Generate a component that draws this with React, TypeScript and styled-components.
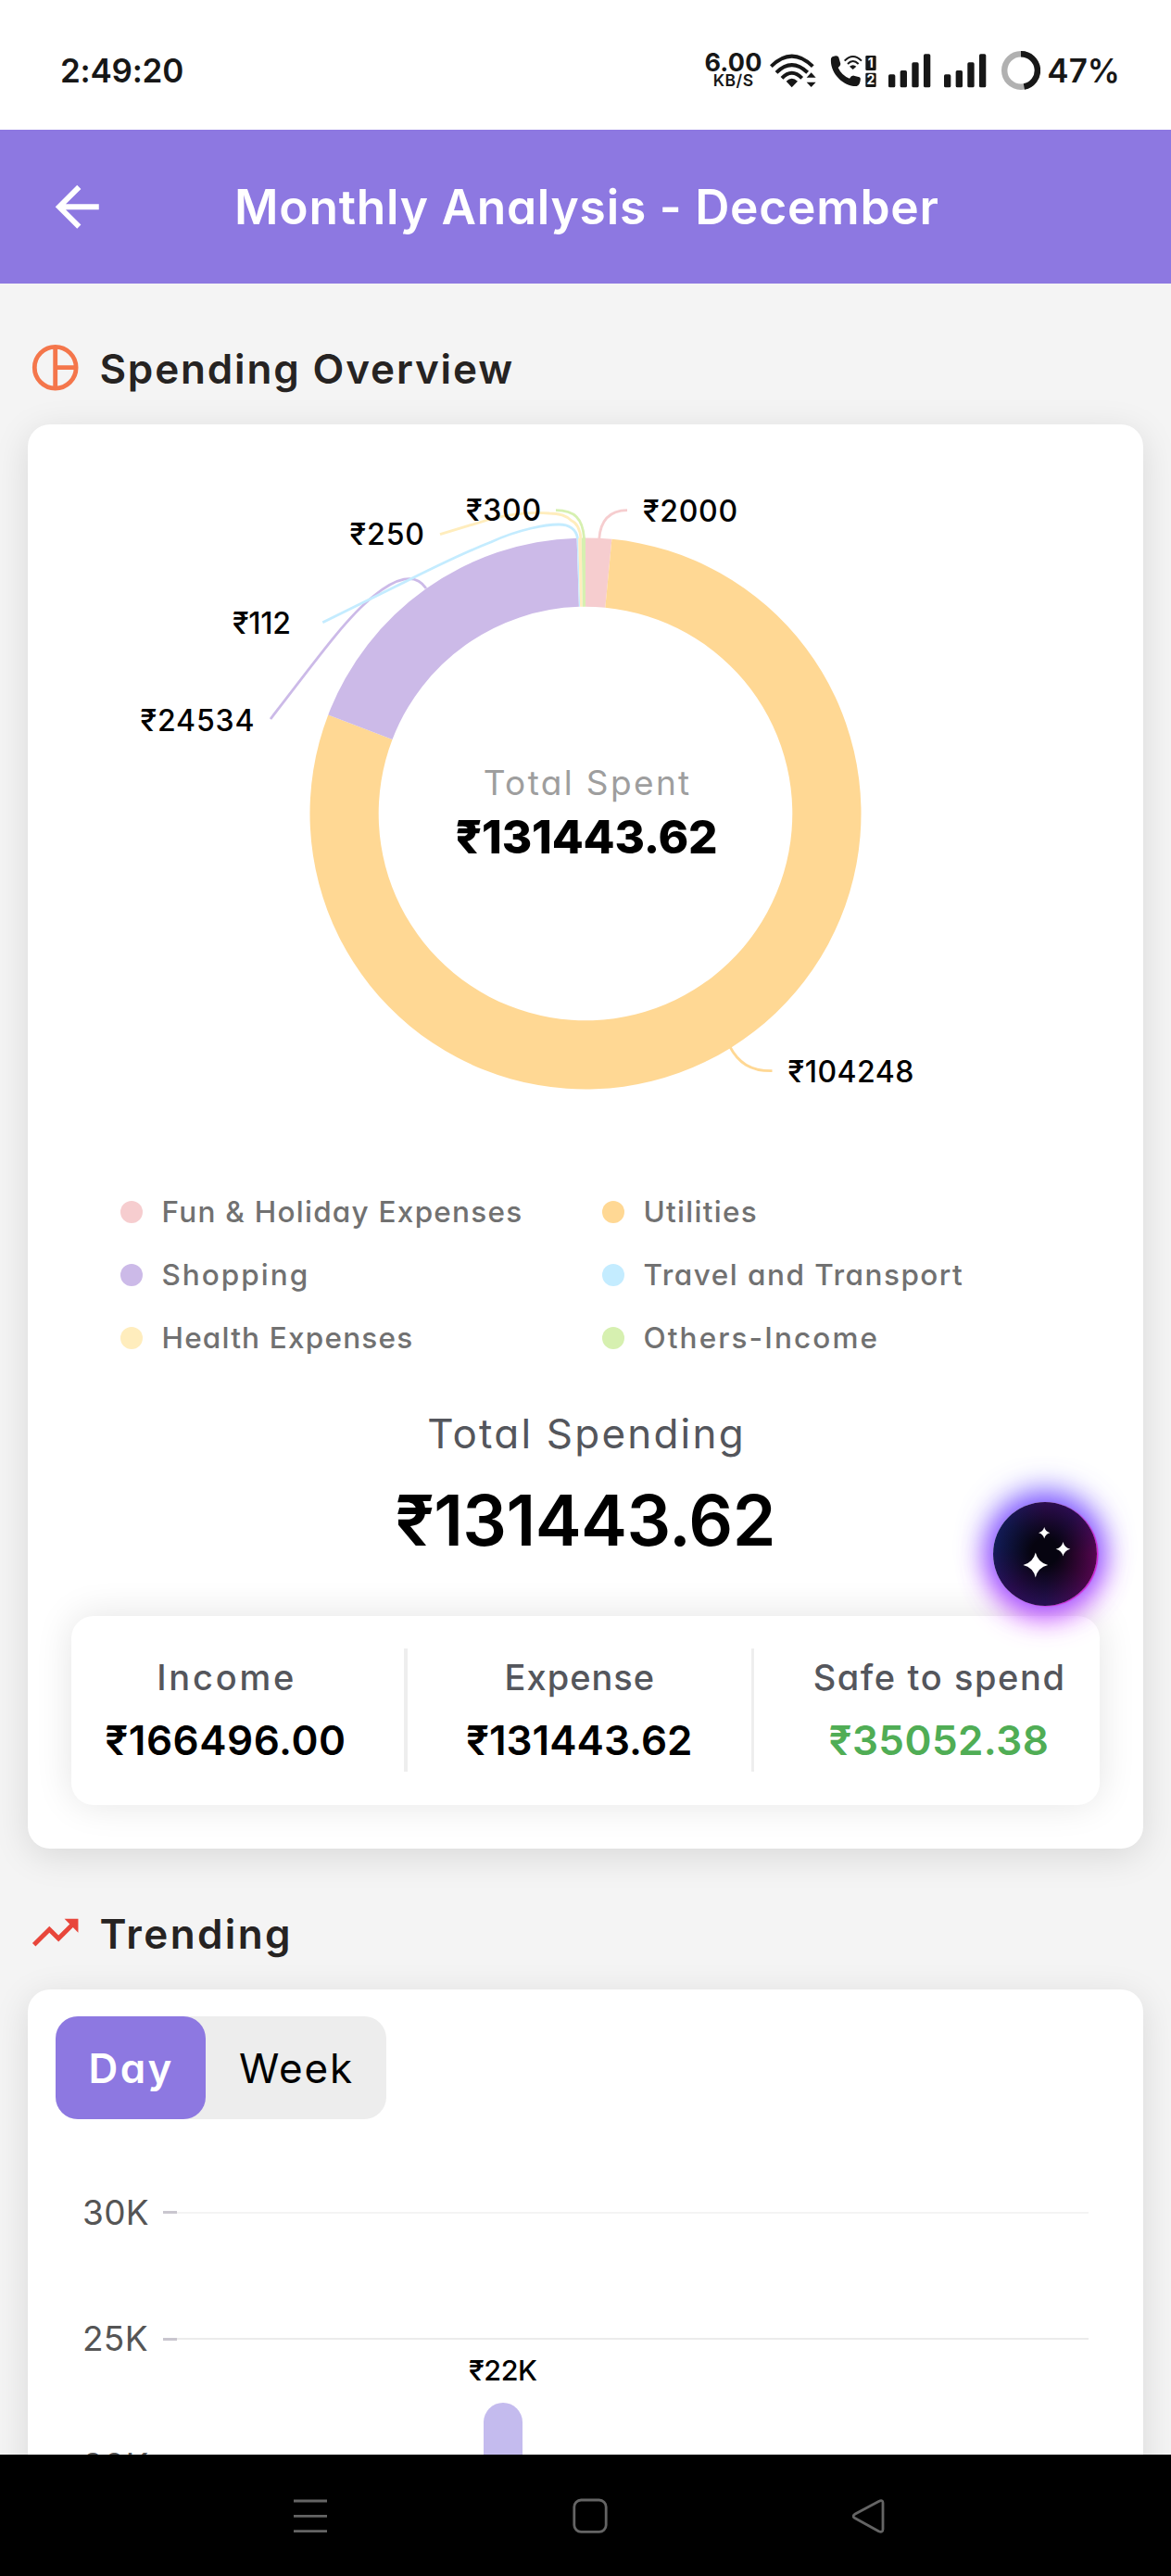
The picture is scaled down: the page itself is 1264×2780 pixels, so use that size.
import React from 'react';
import styled, { createGlobalStyle } from 'styled-components';

const GlobalStyle = createGlobalStyle`
  * { box-sizing: border-box; }
  body {
    margin: 0;
    background: #f4f4f4;
    font-family: Inter, "Noto Sans", sans-serif;
    font-feature-settings: "cv11";
  }
`;

const purple = '#8d78e1';

/* ---------- shared text ---------- */

interface LabelProps {
  $size: number;
  $line: number;
  $weight?: number;
  $color?: string;
  $track?: number;
}

const Label = styled.span<LabelProps>`
  display: block;
  white-space: nowrap;
  font-size: ${(p) => p.$size}px;
  line-height: ${(p) => p.$line}px;
  font-weight: ${(p) => p.$weight ?? 400};
  color: ${(p) => p.$color ?? '#000'};
  letter-spacing: ${(p) => p.$track ?? 0}px;
  margin-right: ${(p) => -(p.$track ?? 0)}px;
`;

/* ---------- page frame ---------- */

const Screen = styled.div`
  display: flex;
  flex-direction: column;
  width: 1264px;
  height: 2780px;
  overflow: hidden;
`;

const StatusBar = styled.div`
  flex: none;
  display: flex;
  align-items: center;
  justify-content: space-between;
  height: 140px;
  padding: 12px 55px 0 65px;
  background: #fff;
`;

const StatusIcons = styled.div`
  display: flex;
  align-items: center;
`;

const NetSpeed = styled.div`
  display: flex;
  flex-direction: column;
  align-items: center;
  width: 60px;
  margin-right: 10px;
`;

const StatusGlyph = styled.svg<{ $w: number; $gap: number }>`
  display: block;
  width: ${(p) => p.$w}px;
  height: 38.3px;
  margin-right: ${(p) => p.$gap}px;
`;

const BatteryRing = styled.svg`
  width: 42px;
  height: 42px;
  margin-right: 7px;
`;

const Header = styled.header`
  flex: none;
  display: grid;
  grid-template-columns: 166px 1fr 164px;
  align-items: center;
  justify-items: center;
  height: 166px;
  background: ${purple};
`;

const BackButton = styled.button`
  display: flex;
  justify-self: start;
  margin-left: 48px;
  padding: 0;
  border: 0;
  background: none;
`;

const Content = styled.main`
  flex: 1;
  min-height: 0;
  overflow: hidden;
  padding: 0 30px;
`;

const SectionTitle = styled.div`
  display: flex;
  align-items: center;
  gap: 18px;
  height: 152px;
  padding-top: 31px;
  svg {
    margin-top: -1px;
  }
`;

const Card = styled.section<{ $height: number }>`
  position: relative;
  height: ${(p) => p.$height}px;
  border-radius: 24px;
  background: #fff;
  box-shadow: 0 8px 38px rgba(0, 0, 0, 0.115);
`;

/* ---------- donut ---------- */

const DonutArea = styled.div`
  position: relative;
  height: 816px;
  > svg {
    display: block;
  }
`;

const DonutCenter = styled.div`
  position: absolute;
  left: 380px;
  top: 361.5px;
  width: 446px;
  display: flex;
  flex-direction: column;
  align-items: center;
`;

const AmountText = styled.text`
  font-size: 32px;
  font-weight: 500;
`;

const Legend = styled.ul`
  display: grid;
  grid-template-columns: 520px 1fr;
  grid-auto-rows: 68px;
  align-items: center;
  margin: 0;
  padding: 0 0 0 100px;
  list-style: none;
`;

const LegendItem = styled.li`
  display: flex;
  align-items: center;
  gap: 20.5px;
`;

const Dot = styled.i<{ $color: string }>`
  width: 24px;
  height: 24px;
  border-radius: 50%;
  background: ${(p) => p.$color};
`;

/* ---------- totals ---------- */

const Totals = styled.div`
  display: flex;
  flex-direction: column;
  align-items: center;
  padding-top: 34px;
`;

const Summary = styled.div`
  display: flex;
  justify-content: space-between;
  align-items: flex-start;
  height: 204px;
  margin: 44.5px 47px 0;
  padding: 35.5px 38px 0 36.5px;
  border-radius: 24px;
  background: #fff;
  box-shadow: 0 -1px 40px rgba(0, 0, 0, 0.11);
`;

const SummaryItem = styled.div`
  display: flex;
  flex-direction: column;
  align-items: center;
`;

const Divider = styled.div`
  width: 3.5px;
  height: 133px;
  background: #eeeeee;
`;

const AssistantButton = styled.button`
  position: absolute;
  left: 1041.5px;
  top: 1162.5px;
  width: 112px;
  height: 112px;
  padding: 0;
  border: 0;
  border-radius: 50%;
  background:
    radial-gradient(circle at 50% 48%, #060410 18%, rgba(6, 4, 16, 0) 68%),
    conic-gradient(#2e0d50, #2c0d52 10%, #55064f 25%, #4b0648 33%, #24104f 50%, #2a0c50 62%, #121c58 78%, #141a55 86%, #2e0d50);
  box-shadow:
    1.5px 0.5px 1px #d21fd0,
    0 -7px 32px 6px rgba(92, 76, 255, 0.8),
    0 9px 30px 5px rgba(220, 60, 255, 0.8);
`;

/* ---------- trend ---------- */

const Segmented = styled.div`
  display: inline-flex;
  height: 110.5px;
  margin: 29px 0 33px 29.5px;
  border-radius: 24px;
  background: #ededed;
`;

const Segment = styled.button<{ $active?: boolean; $width: number }>`
  display: flex;
  align-items: center;
  justify-content: center;
  width: ${(p) => p.$width}px;
  padding: 1px 0 0;
  border: 0;
  border-radius: 24px;
  font-family: inherit;
  font-feature-settings: inherit;
  background: ${(p) => (p.$active ? purple : 'transparent')};
`;

const Plot = styled.div`
  position: relative;
`;

const AxisRow = styled.div`
  display: flex;
  align-items: center;
  height: 136.5px;
  padding: 0 59.5px 0 59px;
`;

const AxisLabel = styled.div`
  width: 87px;
`;

const Tick = styled.div`
  width: 15px;
  height: 3px;
  background: #c9c6cf;
`;

const GridLine = styled.div<{ $faint?: boolean }>`
  flex: 1;
  height: 2px;
  background: ${(p) => (p.$faint ? '#f4f4f4' : '#ebebeb')};
`;

const BarColumn = styled.div`
  position: absolute;
  left: 472.5px;
  top: 213px;
  width: 81px;
  display: flex;
  flex-direction: column;
  align-items: center;
`;

const Bar = styled.div`
  width: 42.5px;
  height: 240px;
  margin-top: 10px;
  border-radius: 21px 21px 0 0;
  background: #c4bbee;
`;

/* ---------- navigation bar ---------- */

const NavBar = styled.nav`
  position: relative;
  flex: none;
  display: grid;
  grid-template-columns: repeat(3, 302px);
  align-items: center;
  justify-items: center;
  height: 131px;
  padding-left: 184px;
  background: #000;
  svg {
    fill: none;
    stroke: #646464;
    stroke-width: 2.8;
  }
`;

/* ---------- data ---------- */

const slices = [
  { name: 'Fun & Holiday Expenses', value: 2000, color: '#f6cdcf', track: 1.25 },
  { name: 'Utilities', value: 104248, color: '#ffd894', track: 1.29 },
  { name: 'Shopping', value: 24534, color: '#ccbae8', track: 2 },
  { name: 'Travel and Transport', value: 112, color: '#c4ecff', track: 1.48 },
  { name: 'Health Expenses', value: 250, color: '#ffedbd', track: 1.2 },
  { name: 'Others-Income', value: 300, color: '#d6f0b0', track: 2.1 },
];

const callouts = [
  { text: '₹24534', x: 151.5, y: 789, track: 0.86, color: '#ccbae8', d: 'M460 635C448 617 427 624 403 643.5C377 664 350 700 292 776' },
  { text: '₹112', x: 251, y: 684, track: -0.3, color: '#c4ecff', d: 'M623.5 581C622 571 614 566 603 566C590 566 560 571 530 585C499 597 467 613 437 628L348.3 671.7' },
  { text: '₹250', x: 377.5, y: 588, track: 0.9, color: '#ffedbd', d: 'M627 581C626 570 622 564 616.7 561.7C611 556 601 554 593 554C573 552 550 555 530 560L475 576.7' },
  { text: '₹300', x: 503, y: 562, track: 0.7, color: '#d6f0b0', d: 'M630.5 581C629 559 620 551 600 550.7' },
  { text: '₹2000', x: 694, y: 562.5, track: 0.68, color: '#f6cdcf', d: 'M646.7 582C648 562 658 551 677 550.7' },
  { text: '₹104248', x: 850.5, y: 1167.5, track: 0.5, color: '#ffd894', d: 'M787.5 1129C797 1147 810 1156 833.5 1155.7' },
];

const CX = 632;
const CY = 878;
const OUTER = 297.5;
const INNER = 223.3;

function ringPath(from: number, to: number) {
  const at = (r: number, a: number) => `${(CX + r * Math.sin(a)).toFixed(2)} ${(CY - r * Math.cos(a)).toFixed(2)}`;
  const large = to - from > Math.PI ? 1 : 0;
  return `M${at(OUTER, from)}A${OUTER} ${OUTER} 0 ${large} 1 ${at(OUTER, to)}L${at(INNER, to)}A${INNER} ${INNER} 0 ${large} 0 ${at(INNER, from)}Z`;
}

function Donut() {
  const total = slices.reduce((sum, s) => sum + s.value, 0);
  let angle = 0;
  return (
    <DonutArea>
      <svg width="1204" height="816" viewBox="30 458 1204 816">
        {slices.map((s) => {
          const start = angle;
          angle += (s.value / total) * Math.PI * 2;
          return <path key={s.name} d={ringPath(start, angle)} fill={s.color} />;
        })}
        {callouts.map((c) => (
          <path key={c.text} d={c.d} fill="none" stroke={c.color} strokeWidth="2.8" />
        ))}
        {callouts.map((c) => (
          <AmountText key={c.text} x={c.x} y={c.y} letterSpacing={c.track}>
            {c.text}
          </AmountText>
        ))}
      </svg>
      <DonutCenter>
        <Label $size={37} $line={50} $color="#9e9e9e" $track={2.36}>Total Spent</Label>
        <Label $size={49.5} $line={67} $weight={800} $track={-0.2}>₹131443.62</Label>
      </DonutCenter>
    </DonutArea>
  );
}

function WifiIcon() {
  return (
    <StatusGlyph $w={50} $gap={14.5} viewBox="245 50 150 115">
      <g fill="none" stroke="#171717" strokeWidth="12">
        <path d="M249 94Q316 28 384 94" />
        <path d="M266 114Q316 65 367 114" />
        <path d="M284 132Q316 99 349 132" />
      </g>
      <path d="M298 142Q316 125 335 142L316 162Z" fill="#171717" />
      <path d="M379 114L394 130H364ZM364 145H394L379 161Z" fill="#171717" />
    </StatusGlyph>
  );
}

function CallIcon() {
  return (
    <StatusGlyph $w={50} $gap={13.5} viewBox="438 50 150 115">
      <path
        d="M441 69Q442 62 456 60Q464 59 466 65L472 86Q472 92 464 98Q476 124 501 133Q507 123 515 124L533 129Q538 131 536 139Q534 155 524 158C480 160 436 113 441 69Z"
        fill="#171717"
      />
      <g fill="none" stroke="#171717" strokeWidth="6">
        <path d="M485 76Q512 48 540 76" />
        <path d="M495 86Q512 68 530 86" />
      </g>
      <path d="M501 94Q512 85 523 94L512 104Z" fill="#171717" />
      <rect x="553" y="59" width="34" height="48" rx="4" fill="#171717" />
      <rect x="553" y="115" width="34" height="46" rx="4" fill="#171717" />
      <g fill="#fff" fontSize="42" fontWeight="700" textAnchor="middle">
        <text x="569" y="98">1</text>
        <text x="570" y="153">2</text>
      </g>
    </StatusGlyph>
  );
}

function SignalIcon({ gap }: { gap: number }) {
  return (
    <StatusGlyph $w={45.3} $gap={gap} viewBox="630 50 136 115" fill="#171717">
      <rect x="630" y="120" width="22" height="42" rx="5" />
      <rect x="668" y="107" width="22" height="55" rx="5" />
      <rect x="706" y="81" width="22" height="81" rx="5" />
      <rect x="744" y="54" width="22" height="108" rx="5" />
    </StatusGlyph>
  );
}

function Sparkles() {
  const star = (x: number, y: number, r: number) => {
    const k = r * 0.24;
    return `M${x} ${y - r}Q${x + k * 0.8} ${y - k * 0.8} ${x + r} ${y}Q${x + k * 0.8} ${y + k * 0.8} ${x} ${y + r}Q${x - k * 0.8} ${y + k * 0.8} ${x - r} ${y}Q${x - k * 0.8} ${y - k * 0.8} ${x} ${y - r}Z`;
  };
  return (
    <svg width="112" height="112" viewBox="0 0 112 112" fill="#fff">
      <path d={star(45.8, 68, 13.4)} />
      <path d={star(75.5, 50.8, 7.8)} />
      <path d={star(55.2, 33.2, 6.2)} />
    </svg>
  );
}

export default function App() {
  return (
    <Screen>
      <GlobalStyle />
      <StatusBar>
        <Label $size={35} $line={42} $weight={600} $color="#171717" $track={-0.25}>2:49:20</Label>
        <StatusIcons>
          <NetSpeed>
            <Label $size={27} $line={21} $weight={700} $color="#171717" $track={0.2}>6.00</Label>
            <Label $size={17.5} $line={17} $weight={600} $color="#171717" $track={0.5}>KB/S</Label>
          </NetSpeed>
          <WifiIcon />
          <CallIcon />
          <SignalIcon gap={14.7} />
          <SignalIcon gap={16.7} />
          <BatteryRing viewBox="0 0 42 42" fill="none" strokeWidth="6.4">
            <circle cx="21" cy="21" r="17.8" stroke="#b1b1b1" />
            <path d="M21 3.2A17.8 17.8 0 0 1 24.4 38.5" stroke="#171717" />
          </BatteryRing>
          <Label $size={35} $line={46} $weight={600} $color="#171717">47%</Label>
        </StatusIcons>
      </StatusBar>

      <Header>
        <BackButton aria-label="Back">
          <svg width="70.5" height="70.5" viewBox="0 0 24 24" fill="#fff">
            <path d="M20 11H7.83l5.59-5.59L12 4l-8 8 8 8 1.41-1.41L7.83 13H20v-2z" />
          </svg>
        </BackButton>
        <Label $size={51.5} $line={70} $weight={600} $color="#fff" $track={0.76}>Monthly Analysis - December</Label>
      </Header>

      <Content>
        <SectionTitle>
          <svg width="59.4" height="59.4" viewBox="0 0 24 24" fill="none" stroke="#f4764b" strokeWidth="1.95">
            <circle cx="12" cy="12" r="9.05" />
            <path d="M12 3V21M12 12H21" />
          </svg>
          <Label $size={44} $line={60} $weight={600} $color="#262322" $track={1.85}>Spending Overview</Label>
        </SectionTitle>

        <Card $height={1537}>
          <Donut />
          <Legend>
            {slices.map((s) => (
              <LegendItem key={s.name}>
                <Dot $color={s.color} />
                <Label $size={31.5} $line={40} $weight={500} $color="#717171" $track={s.track}>{s.name}</Label>
              </LegendItem>
            ))}
          </Legend>
          <Totals>
            <Label $size={44} $line={70} $color="#54565c" $track={2.2}>Total Spending</Label>
            <Label $size={75} $line={117} $weight={600} $track={-0.56}>₹131443.62</Label>
          </Totals>
          <Summary>
            <SummaryItem>
              <Label $size={38} $line={62} $weight={500} $color="#54565c" $track={2.8}>Income</Label>
              <Label $size={44} $line={75} $weight={600} $track={0.54}>₹166496.00</Label>
            </SummaryItem>
            <Divider />
            <SummaryItem>
              <Label $size={38} $line={62} $weight={500} $color="#54565c" $track={1}>Expense</Label>
              <Label $size={44} $line={75} $weight={600} $track={0.05}>₹131443.62</Label>
            </SummaryItem>
            <Divider />
            <SummaryItem>
              <Label $size={38} $line={62} $weight={500} $color="#54565c" $track={1.6}>Safe to spend</Label>
              <Label $size={44} $line={75} $weight={600} $color="#50ad55" $track={0.44}>₹35052.38</Label>
            </SummaryItem>
          </Summary>
          <AssistantButton aria-label="Assistant">
            <Sparkles />
          </AssistantButton>
        </Card>

        <SectionTitle>
          <svg width="59.4" height="59.4" viewBox="0 0 24 24" fill="#e8463b">
            <path d="M16 6l2.29 2.29-4.88 4.88-4-4L2 16.59 3.41 18l6-6 4 4 6.3-6.29L22 12V6z" />
          </svg>
          <Label $size={44} $line={60} $weight={600} $color="#262322" $track={2.4}>Trending</Label>
        </SectionTitle>

        <Card $height={900}>
          <Segmented>
            <Segment $active $width={162}>
              <Label $size={44} $line={60} $weight={600} $color="#fff" $track={2.4}>Day</Label>
            </Segment>
            <Segment $width={195}>
              <Label $size={44} $line={60} $track={1.87}>Week</Label>
            </Segment>
          </Segmented>
          <Plot>
            {['30K', '25K', '20K'].map((k, i) => (
              <AxisRow key={k}>
                <AxisLabel>
                  <Label $size={37} $line={50} $color="#555" $track={0.3}>{k}</Label>
                </AxisLabel>
                <Tick />
                <GridLine $faint={i === 0} />
              </AxisRow>
            ))}
            <BarColumn>
              <Label $size={30.5} $line={50} $weight={500} $track={-0.4}>₹22K</Label>
              <Bar />
            </BarColumn>
          </Plot>
        </Card>
      </Content>

      <NavBar>
        <svg width="36" height="38" viewBox="0 0 36 38">
          <path d="M0 3H36M0 19.3H36M0 35.7H36" />
        </svg>
        <svg width="38" height="38" viewBox="0 0 38 38">
          <rect x="1.8" y="2" width="34.4" height="34.4" rx="7.5" />
        </svg>
        <svg width="38" height="38" viewBox="0 0 38 38">
          <path d="M28.5 3.4L3.2 17Q-1 19.4 3.2 21.8L28.5 35.8Q33 37.6 33 33.5V5Q33 1.2 28.5 3.4Z" strokeLinejoin="round" />
        </svg>
      </NavBar>
    </Screen>
  );
}
